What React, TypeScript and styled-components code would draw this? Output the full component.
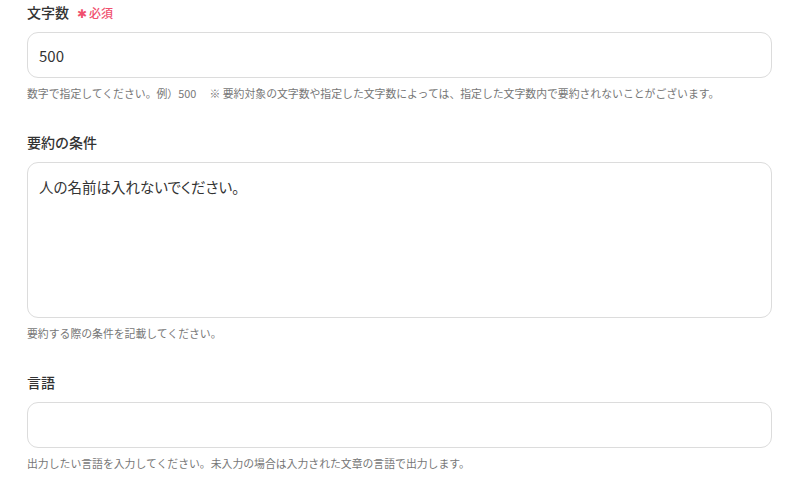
import styled, { createGlobalStyle } from "styled-components";

const GlobalStyle = createGlobalStyle`
  body {
    margin: 0;
    background: #fff;
    font-family: "Noto Sans CJK JP", "Noto Sans", sans-serif;
    color: #333;
  }
`;

const Page = styled.div`
  padding: 2px 27px 0;
  display: flex;
  flex-direction: column;
  gap: 31px;
`;

const Field = styled.div`
  display: flex;
  flex-direction: column;
`;

const Label = styled.div`
  display: flex;
  align-items: center;
  gap: 8px;
  height: 20px;
  margin-bottom: 10px;
  font-size: 14px;
  font-weight: 500;
  color: #333;
`;

const Required = styled.span`
  display: flex;
  align-items: center;
  gap: 2px;
  font-size: 12px;
  font-weight: 500;
  color: #f0506e;
`;

const Input = styled.div`
  box-sizing: border-box;
  height: 46px;
  border: 1px solid #dcdcdc;
  border-radius: 11px;
  padding: 0 11px;
  display: flex;
  align-items: center;
  font-size: 15px;
  color: #333;
`;

const TextArea = styled.div`
  box-sizing: border-box;
  height: 156px;
  border: 1px solid #dcdcdc;
  border-radius: 11px;
  padding: 13px 11px;
  font-size: 14.5px;
  line-height: 22px;
  color: #333;
  font-feature-settings: "palt";
`;

const Help = styled.div`
  margin-top: 7px;
  font-size: 10.85px;
  line-height: 16px;
  color: #777;
  white-space: pre;
`;

const App = () => {
  return (
    <>
      <GlobalStyle />
      <Page>
        <Field>
          <Label>
            文字数
            <Required>
              <span>✱</span>必須
            </Required>
          </Label>
          <Input>500</Input>
          <Help>
            数字で指定してください。例）500　 ※ 要約対象の文字数や指定した文字数によっては、指定した文字数内で要約されないことがございます。
          </Help>
        </Field>
        <Field>
          <Label>要約の条件</Label>
          <TextArea>人の名前は入れないでください。</TextArea>
          <Help>要約する際の条件を記載してください。</Help>
        </Field>
        <Field>
          <Label>言語</Label>
          <Input />
          <Help>出力したい言語を入力してください。未入力の場合は入力された文章の言語で出力します。</Help>
        </Field>
      </Page>
    </>
  );
};

export default App;
